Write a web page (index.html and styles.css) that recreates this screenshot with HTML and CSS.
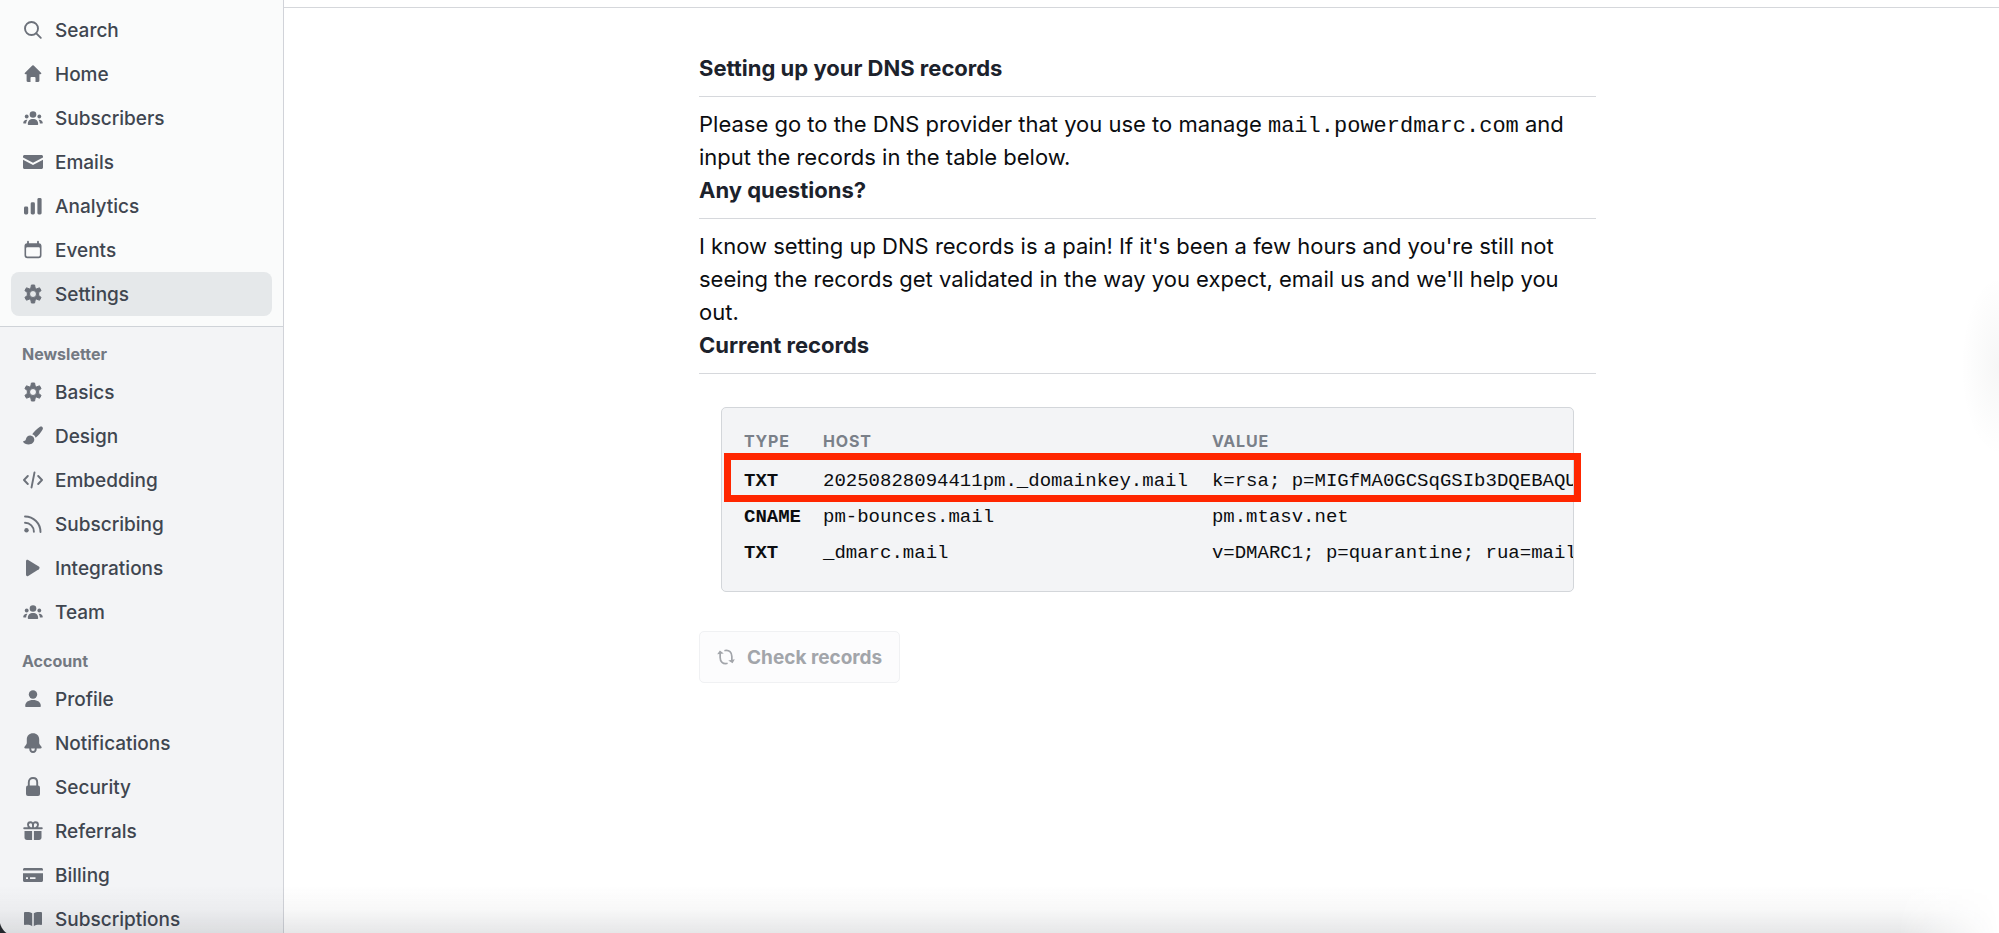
FILE: index.html
```
<!DOCTYPE html>
<html lang="en">
<head>
    <meta charset="UTF-8">
    <meta name="viewport" content="width=device-width, initial-scale=1.0">
    <link rel="stylesheet" href="styles.css">
    <title>DNS records</title>
</head>
<body>
    <!-- icons used more than once -->
    <svg class="sprite" aria-hidden="true">
        <symbol id="icon-gear" viewBox="0 0 20 20">
            <path fill-rule="evenodd" stroke="currentColor" stroke-width="1" stroke-linejoin="round" d="M8.400 1h3.200l.5 3 1.500.9 2.900-1.100 1.600 2.800-2.400 1.900v3l2.400 1.900-1.600 2.800-2.900-1.100-1.500.9-.5 3H8.400l-.5-3-1.500-.9-2.900 1.100-1.600-2.800 2.400-1.900v-3L1.900 6.600l1.600-2.800 2.900 1.100 1.500-.9zM10 6.500a3.500 3.500 0 1 0 0 7 3.500 3.500 0 0 0 0-7z"/>
        </symbol>
        <symbol id="icon-people" viewBox="0 0 20 20">
            <circle cx="10" cy="6.500" r="3.300"/>
            <circle cx="3.700" cy="8.500" r="1.900"/>
            <circle cx="16.300" cy="8.500" r="1.900"/>
            <path d="M4.800 16.300c0-3.300 2-5.200 5.200-5.200s5.200 1.900 5.200 5.200c0 .4-.3.700-.7.700h-9c-.4 0-.7-.3-.7-.7zM3.900 11.700c-2.300 0-3.600 1.300-3.700 3.300 0 .3.200.5.500.5h2.400c.1-1.500.5-2.700 1.300-3.700zM16.100 11.700c2.300 0 3.600 1.300 3.700 3.300 0 .3-.2.500-.5.500h-2.400c-.1-1.500-.5-2.700-1.300-3.700z"/>
        </symbol>
    </svg>

    <div class="layout">
        <aside class="sidebar">
            <nav class="nav-main">
                <a href="#" class="nav-item">
                    <svg viewBox="0 0 20 20"><g class="line"><circle cx="8.500" cy="8.500" r="6.500"/><path d="M13.300 13.300l4.500 4.500"/></g></svg>
                    Search
                </a>
                <a href="#" class="nav-item">
                    <svg viewBox="0 0 20 20"><path d="M9.300 1.600a1 1 0 0 1 1.400 0l7.300 7.200c.7.700.3 1.500-.6 1.500h-1v6.500c0 .7-.5 1.200-1.200 1.200h-2.700v-4c0-.6-.3-.9-.9-.9H8.400c-.6 0-.9.300-.9.900v4H4.800c-.7 0-1.200-.5-1.200-1.200v-6.500h-1c-.9 0-1.300-.8-.6-1.500z"/></svg>
                    Home
                </a>
                <a href="#" class="nav-item">
                    <svg><use href="#icon-people"/></svg>
                    Subscribers
                </a>
                <a href="#" class="nav-item">
                    <svg viewBox="0 0 20 20"><path d="M1.500 3h17c.8 0 1.500.7 1.500 1.500v1L10 10.800 0 5.500v-1C0 3.700.7 3 1.500 3zM0 7.700l10 5.200 10-5.200v7.800c0 .8-.7 1.500-1.500 1.500h-17C.7 17 0 16.300 0 15.500z"/></svg>
                    Emails
                </a>
                <a href="#" class="nav-item">
                    <svg viewBox="0 0 20 20"><rect x="1" y="10.500" width="4.200" height="8" rx="1.400"/><rect x="7.700" y="6.300" width="4.200" height="12.200" rx="1.400"/><rect x="14.400" y="2" width="4.200" height="16.500" rx="1.400"/></svg>
                    Analytics
                </a>
                <a href="#" class="nav-item">
                    <svg viewBox="0 0 20 20"><path fill-rule="evenodd" d="M5 .8c.6 0 .9.300.9.900v1.500h8.200V1.700c0-.6.300-.9.900-.9s.9.300.9.900v1.500c1.700.1 2.600 1.200 2.600 2.800v9.300c0 1.900-1 2.900-2.900 2.900H4.400c-1.900 0-2.900-1-2.900-2.900V6c0-1.600.9-2.700 2.600-2.800V1.700c0-.6.300-.9.900-.9zM4.600 7.300c-.9 0-1.500.5-1.500 1.400v6.300c0 .9.600 1.500 1.500 1.500h10.800c.9 0 1.500-.6 1.500-1.500V8.700c0-.9-.6-1.400-1.500-1.400z"/></svg>
                    Events
                </a>
                <a href="#" class="nav-item active" aria-current="page">
                    <svg><use href="#icon-gear"/></svg>
                    Settings
                </a>
            </nav>

            <div class="nav-sub">
                <h2 class="nav-label">Newsletter</h2>
                <nav>
                    <a href="#" class="nav-item">
                        <svg><use href="#icon-gear"/></svg>
                        Basics
                    </a>
                    <a href="#" class="nav-item">
                        <svg viewBox="0 0 20 20"><path d="M19.300.9c.8.700.8 1.600.3 2.500-1.700 3-4.200 6.200-7 8.300-.4-1.700-1.700-3-3.400-3.500C11.500 5.300 14.300 2.500 17 .8c.8-.5 1.600-.5 2.300.100zM7.400 9.400c2.200.2 3.900 1.900 3.900 4.100 0 3-2.500 4.900-5.600 4.900-2.700 0-4.700-.9-5.500-2.500-.3-.6.100-1 .8-1 1.100 0 1.600-.5 1.900-1.700.5-2.400 2.200-4 4.500-3.800z"/></svg>
                        Design
                    </a>
                    <a href="#" class="nav-item">
                        <svg viewBox="0 0 20 20"><g class="line"><path d="M4.800 6L1 10l3.800 4M15.200 6l3.800 4-3.800 4M11.500 2.500l-3 15"/></g></svg>
                        Embedding
                    </a>
                    <a href="#" class="nav-item">
                        <svg viewBox="0 0 20 20"><circle cx="3.500" cy="16.300" r="2.200"/><g class="line"><path d="M2 8.800c5 0 8.900 3.900 8.900 8.900M2 2.500c8.600 0 15.500 6.900 15.500 15.500"/></g></svg>
                        Subscribing
                    </a>
                    <a href="#" class="nav-item">
                        <svg viewBox="0 0 20 20"><path d="M3 3.300C3 2 4.100 1.500 5.200 2.100l10.600 6.500c1 .7 1 2 0 2.700L5.200 17.900C4.100 18.500 3 18 3 16.700z"/></svg>
                        Integrations
                    </a>
                    <a href="#" class="nav-item">
                        <svg><use href="#icon-people"/></svg>
                        Team
                    </a>
                </nav>

                <h2 class="nav-label">Account</h2>
                <nav>
                    <a href="#" class="nav-item">
                        <svg viewBox="0 0 20 20"><circle cx="10" cy="5.500" r="4.200"/><path d="M2.200 17c0-3.600 3-5.900 7.800-5.900s7.800 2.300 7.800 5.900c0 .6-.4 1-1 1H3.200c-.6 0-1-.4-1-1z"/></svg>
                        Profile
                    </a>
                    <a href="#" class="nav-item">
                        <svg viewBox="0 0 20 20"><path d="M10 .2c3.700 0 6.200 2.500 6.200 6.200v3.200c0 1.300.4 2 1.300 3l.8.9c.8 1 .3 2-.9 2H2.600c-1.200 0-1.700-1-.9-2l.8-.9c.9-1 1.300-1.700 1.300-3V6.400C3.800 2.700 6.300.2 10 .2z"/><g class="line"><path d="M7.200 15.500c0 2.200 1.100 3.500 2.800 3.500s2.800-1.300 2.800-3.500"/></g></svg>
                        Notifications
                    </a>
                    <a href="#" class="nav-item">
                        <svg viewBox="0 0 20 20"><rect x="3" y="8.500" width="14" height="10.500" rx="2"/><g class="line"><path d="M5.800 9.500V5.300C5.800 2.700 7.500 1 10 1s4.200 1.700 4.200 4.300v4.200"/></g></svg>
                        Security
                    </a>
                    <a href="#" class="nav-item">
                        <svg viewBox="0 0 20 20"><g class="line"><path d="M1.200 7.300h17.600M10 7V4.500C10 2.300 9 1.200 7.500 1.200S5 2.200 5 3.700s.8 2.500 2 3.200M10 4.500c0-2.200 1-3.300 2.500-3.300S15 2.200 15 3.700s-.8 2.500-2 3.200"/></g><path d="M1.500 10h7.600v9H4c-1.600 0-2.500-.9-2.500-2.500zM10.900 10h7.600v6.500c0 1.600-.9 2.500-2.500 2.500h-5.100z"/></svg>
                        Referrals
                    </a>
                    <a href="#" class="nav-item">
                        <svg viewBox="0 0 20 20"><path fill-rule="evenodd" d="M1.500 3h17c.8 0 1.500.7 1.500 1.500v1H0v-1C0 3.700.7 3 1.500 3zM0 8.300h20v7.200c0 .8-.7 1.500-1.500 1.500h-17C.7 17 0 16.300 0 15.500zM3 12.200v1.800h2v-1.800zM7 12.200v1.800h5.500v-1.800z"/></svg>
                        Billing
                    </a>
                    <a href="#" class="nav-item">
                        <svg viewBox="0 0 20 20"><path d="M9.200 4.300v13C7.500 16 4.700 15.600 2 16c-.6.100-1-.2-1-.8V4.200c0-.6.300-1 .9-1.100 2.800-.5 5.600-.1 7.300 1.200zM10.800 4.300v13c1.700-1.300 4.500-1.700 7.200-1.300.6.100 1-.2 1-.8V4.200c0-.6-.3-1-.9-1.100-2.800-.5-5.600-.1-7.300 1.200z"/></svg>
                        Subscriptions
                    </a>
                </nav>
            </div>
        </aside>

        <main class="main">
            <div class="content">
                <h3>Setting up your DNS records</h3>
                <p>Please go to the DNS provider that you use to manage <code>mail.powerdmarc.com</code> and input the records in the table below.</p>

                <h3>Any questions?</h3>
                <p>I know setting up DNS records is a pain! If it's been a few hours and you're still not seeing the records get validated in the way you expect, email us and we'll help you out.</p>

                <h3>Current records</h3>
                <div class="records">
                    <div class="records-scroll">
                        <table>
                            <thead>
                                <tr>
                                    <th>Type</th>
                                    <th>Host</th>
                                    <th>Value</th>
                                </tr>
                            </thead>
                            <tbody>
                                <tr>
                                    <td class="type">TXT</td>
                                    <td class="host">20250828094411pm._domainkey.mail</td>
                                    <td>k=rsa; p=MIGfMA0GCSqGSIb3DQEBAQU</td>
                                </tr>
                                <tr>
                                    <td class="type">CNAME</td>
                                    <td class="host">pm-bounces.mail</td>
                                    <td>pm.mtasv.net</td>
                                </tr>
                                <tr>
                                    <td class="type">TXT</td>
                                    <td class="host">_dmarc.mail</td>
                                    <td>v=DMARC1; p=quarantine; rua=mail</td>
                                </tr>
                            </tbody>
                        </table>
                    </div>
                    <div class="highlight"></div>
                </div>

                <button type="button" class="check-button" disabled>
                    <svg viewBox="0 0 20 20"><g class="line"><path d="M9 2.800c4.500-.8 7.500 2 7.500 6.700v3.500M11 17.200c-4.500.8-7.500-2-7.500-6.700V6"/></g><path d="M.2 7l3-4.300 4.300 3.500zM19.800 12.500l-2.500 4.500-4.800-3z"/></svg>
                    Check records
                </button>
            </div>
        </main>
    </div>
</body>
</html>
```
FILE: styles.css
```
* {
    box-sizing: border-box;
}

body {
    font-family: Inter, "Liberation Sans", sans-serif;
    margin: 0;
    height: 100vh;
    overflow: hidden;
    position: relative;
    background-color: #ffffff;
    color: #0b0d10;
}

/* soft shadow along the bottom of the window */
body::after {
    content: "";
    position: absolute;
    left: 0;
    right: 0;
    bottom: 0;
    height: 48px;
    background: linear-gradient(to bottom, rgba(30, 35, 45, 0), rgba(30, 35, 45, 0.03) 50%, rgba(30, 35, 45, 0.11));
    -webkit-mask-image: linear-gradient(to right, #000 95%, transparent);
    mask-image: linear-gradient(to right, #000 95%, transparent);
    pointer-events: none;
}

/* rounded window corner */
body::before {
    content: "";
    position: absolute;
    left: 0;
    bottom: 0;
    width: 14px;
    height: 14px;
    background: radial-gradient(circle at 17px 0, transparent 17px, #24272c 18px);
    z-index: 1;
}

.sprite {
    display: none;
}

svg {
    flex: none;
    width: 20px;
    height: 20px;
    fill: currentColor;
}

.line {
    fill: none;
    stroke: currentColor;
    stroke-width: 1.9;
    stroke-linecap: round;
    stroke-linejoin: round;
}

.layout {
    display: flex;
    height: 100%;
}

/* Sidebar */
.sidebar {
    flex: none;
    width: 284px;
    overflow: hidden;
    border-right: 1px solid #d1d3d9;
    background-color: #f3f4f6;
}

.nav-main {
    padding: 8px 0 10px;
    border-bottom: 1px solid #cfd3d8;
    background-color: #fafbfb;
}

.nav-item {
    display: flex;
    align-items: center;
    gap: 12px;
    height: 44px;
    margin: 0 11px;
    padding: 0 12px;
    border-radius: 8px;
    color: #3f4650;
    font-size: 19px;
    font-weight: 500;
    text-decoration: none;
}

.nav-item svg {
    color: #6c717a;
}

.nav-item.active {
    background-color: #e5e8ea;
}

.nav-label {
    margin: 0;
    padding: 15px 22px 4px;
    color: #737982;
    font-size: 16px;
    font-weight: 700;
    line-height: 24px;
}

/* Content */
.main {
    flex: 1;
    margin-top: 7px;
    padding: 44px 0 0 12px;
    border-top: 1px solid #d5d7db;
    background: radial-gradient(ellipse 38px 90px at 100% 358px, rgba(20, 30, 30, 0.04), transparent) no-repeat;
}

.content {
    max-width: 897px;
    margin: 0 auto;
}

h3 {
    margin: 0 0 11px;
    padding-bottom: 12px;
    border-bottom: 1px solid #d6d8dc;
    color: #1c222c;
    font-size: 22px;
    font-weight: 700;
    line-height: 32px;
}

p {
    margin: 0;
    font-size: 22px;
    line-height: 33px;
}

code {
    font-family: "Liberation Mono", monospace;
    font-size: 22px;
    line-height: 1;
}

.records {
    position: relative;
    margin: 33px 22px 39px;
}

.records-scroll {
    overflow: hidden;
    padding: 22px 22px 20px;
    border: 1px solid #d3d6da;
    border-radius: 5px;
    background-color: #f3f4f6;
}

table {
    border-collapse: collapse;
    white-space: nowrap;
}

th {
    height: 33px;
    padding: 0 22px 0 0;
    color: #7a8089;
    font-size: 16px;
    font-weight: 700;
    line-height: 22px;
    letter-spacing: 0.05em;
    text-align: left;
    text-transform: uppercase;
    vertical-align: top;
}

td {
    height: 36px;
    padding: 0 22px 0 0;
    font-family: "Liberation Mono", monospace;
    font-size: 19px;
}

.type {
    font-weight: 700;
}

.host {
    padding-right: 24px;
}

/* red frame around the first record */
.highlight {
    position: absolute;
    top: 46px;
    left: 3px;
    right: -7px;
    height: 49px;
    border: 7px solid #ff2600;
}

.check-button {
    display: flex;
    align-items: center;
    gap: 12px;
    height: 52px;
    padding: 0 17px;
    border: 1px solid #f0f1f3;
    border-radius: 5px;
    background-color: #fcfcfd;
    color: #a2a5aa;
    font-family: inherit;
    font-size: 19px;
    font-weight: 700;
}

.check-button svg {
    width: 18px;
    height: 18px;
}
```
